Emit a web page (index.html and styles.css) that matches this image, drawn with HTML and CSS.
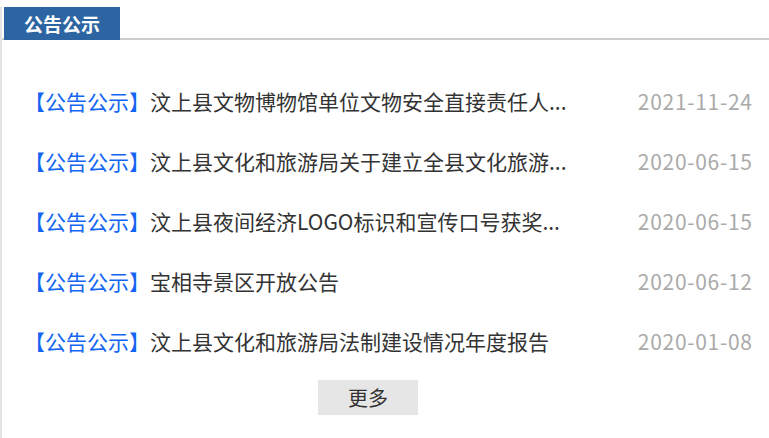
FILE: index.html
```html
<!DOCTYPE html>
<html lang="zh-CN">

<head>
  <meta charset="UTF-8">
  <meta name="viewport" content="width=device-width, initial-scale=1.0">
  <title>公告公示</title>

  <link rel="stylesheet" href="styles.css">
</head>

<body>
  <main class="panel">
    <div class="tab-bar">
      <span class="tab">公告公示</span>
    </div>

    <ul class="news-list">
      <li>
        <a href="#"><span class="tag">【公告公示】</span>汶上县文物博物馆单位文物安全直接责任人...</a>
        <span class="date">2021-11-24</span>
      </li>
      <li>
        <a href="#"><span class="tag">【公告公示】</span>汶上县文化和旅游局关于建立全县文化旅游...</a>
        <span class="date">2020-06-15</span>
      </li>
      <li>
        <a href="#"><span class="tag">【公告公示】</span>汶上县夜间经济LOGO标识和宣传口号获奖...</a>
        <span class="date">2020-06-15</span>
      </li>
      <li>
        <a href="#"><span class="tag">【公告公示】</span>宝相寺景区开放公告</a>
        <span class="date">2020-06-12</span>
      </li>
      <li>
        <a href="#"><span class="tag">【公告公示】</span>汶上县文化和旅游局法制建设情况年度报告</a>
        <span class="date">2020-01-08</span>
      </li>
    </ul>

    <a class="more" href="#">更多</a>
  </main>
</body>

</html>
```

FILE: styles.css
```css
body {
  margin: 0;
  font-family: "Noto Sans CJK SC", "Noto Sans", sans-serif;
}

.panel {
  border-left: 2px solid #e3e3e3;
  height: 438px;
  box-sizing: border-box;
}

.tab-bar {
  align-items: flex-end;
  border-bottom: 2px solid #cccccc;
  display: flex;
  height: 31px;
  margin-top: 7px;
  padding-left: 2px;
}

.tab {
  background: #2d64a2;
  color: #fff;
  font-size: 19px;
  font-weight: bold;
  height: 33px;
  line-height: 33px;
  margin-bottom: -2px;
  text-align: center;
  width: 116px;
}

.news-list {
  list-style: none;
  margin: 31px 0 0;
  padding: 0;
}

.news-list li {
  align-items: center;
  display: flex;
  font-size: 21px;
  height: 60px;
  justify-content: space-between;
  padding: 0 17px 0 22px;
}

.news-list a {
  color: #333;
  text-decoration: none;
  white-space: nowrap;
}

.tag {
  color: #1466f2;
}

.date {
  color: #aaa;
  letter-spacing: 0.7px;
  margin-right: -0.7px;
}

.more {
  background: #e6e6e6;
  color: #333;
  display: block;
  font-size: 20px;
  height: 35px;
  line-height: 35px;
  margin: 9px 0 0 316px;
  text-align: center;
  text-decoration: none;
  width: 100px;
}
```
